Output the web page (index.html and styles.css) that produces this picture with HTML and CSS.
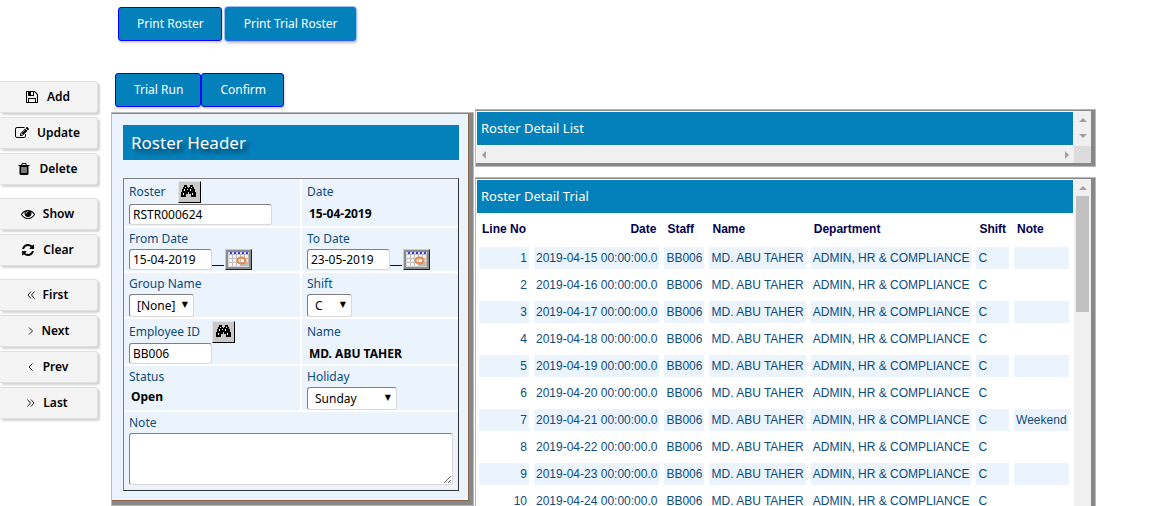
FILE: index.html
```html
<!DOCTYPE html>
<html lang="en">
<head>
<meta charset="utf-8">
<title>Roster</title>
<link rel="stylesheet" href="styles.css">
</head>
<body>
<svg class="defs" aria-hidden="true">
  <symbol id="binoculars" viewBox="0 0 16 14">
    <path d="M4 0h3v2h1v1h1V2h1V0h3v2h1v2h1v3h1v5h-5V9H9V7H8v2H6v3H1V7h1V4h1V2h1z" transform="translate(-1 0)"/>
    <path d="M4 2h1v1H4zM3 4h1v2H3zM2 8h1v2H2zM10 2h1v1h-1zM9 4h1v2H9zM11 8h1v2h-1zM6 4h1v1H6z" fill="#fff"/>
  </symbol>
  <symbol id="calendar" viewBox="0 0 20 14">
    <path d="M0 0h20v14H0z" fill="#bdbdbd"/>
    <path d="M0 3h3v3H0zM4 3h3v3H4zM8 3h3v3H8zM12 3h3v3h-3zM16 3h3v3h-3zM0 7h3v3H0zM4 7h3v3H4zM8 7h3v3H8zM12 7h3v3h-3zM16 7h3v3h-3zM0 11h3v3H0zM4 11h3v3H4zM8 11h3v3H8z" fill="#f2f2f2"/>
    <path d="M0 0h20v2H0z" fill="#d8d8f0"/>
    <path d="M1 1h19" stroke="#3a3af0" stroke-width="2" stroke-dasharray="2 2" fill="none"/>
    <ellipse cx="12.500" cy="8.500" rx="4" ry="3" fill="none" stroke="#ee8540" stroke-width="2"/>
    <path d="M17 6v5" stroke="#ee9d63" fill="none"/>
  </symbol>
</svg>
<div class="page">
  <nav class="side">
    <div class="group">
      <button class="nav-btn"><svg class="fa" viewBox="0 0 1792 1792"><path d="M512 1536h768v-384h-768v384zm896 0h128v-896q0-14-10-38.500t-20-34.500l-281-281q-10-10-34-20t-39-10v416q0 40-28 68t-68 28h-576q-40 0-68-28t-28-68v-416h-128v1280h128v-416q0-40 28-68t68-28h832q40 0 68 28t28 68v416zm-384-928v-320q0-13-9.500-22.500t-22.500-9.500h-192q-13 0-22.500 9.500t-9.500 22.500v320q0 13 9.500 22.500t22.500 9.500h192q13 0 22.500-9.500t9.500-22.500zm640 32v928q0 40-28 68t-68 28h-1344q-40 0-68-28t-28-68v-1344q0-40 28-68t68-28h928q40 0 88 20t76 48l280 280q28 28 48 76t20 88z"/></svg>Add</button>
      <button class="nav-btn"><svg class="fa" viewBox="0 0 1792 1792"><path d="M888 1184l116-116-152-152-116 116v56h96v96h56zm440-720q-16-16-33 1l-350 350q-17 17-1 33t33-1l350-350q17-17 1-33zm80 594v190q0 119-84.500 203.500t-203.500 84.500h-832q-119 0-203.500-84.500t-84.500-203.500v-832q0-119 84.500-203.500t203.500-84.500h832q63 0 117 25 15 7 18 23 3 17-9 29l-49 49q-14 14-32 8-23-6-45-6h-832q-66 0-113 47t-47 113v832q0 66 47 113t113 47h832q66 0 113-47t47-113v-126q0-13 9-22l64-64q15-15 35-7t20 29zm-96-738l288 288-672 672h-288v-288zm444 132l-92 92-288-288 92-92q28-28 68-28t68 28l152 152q28 28 28 68t-28 68z"/></svg>Update</button>
      <button class="nav-btn"><svg class="fa" viewBox="0 0 1792 1792"><path d="M704 1376v-704q0-14-9-23t-23-9h-64q-14 0-23 9t-9 23v704q0 14 9 23t23 9h64q14 0 23-9t9-23zm256 0v-704q0-14-9-23t-23-9h-64q-14 0-23 9t-9 23v704q0 14 9 23t23 9h64q14 0 23-9t9-23zm256 0v-704q0-14-9-23t-23-9h-64q-14 0-23 9t-9 23v704q0 14 9 23t23 9h64q14 0 23-9t9-23zm-544-992h448l-48-117q-7-9-17-11h-317q-10 2-17 11zm928 32v64q0 14-9 23t-23 9h-96v948q0 83-47 143.500t-113 60.500h-832q-66 0-113-58.500t-47-141.500v-952h-96q-14 0-23-9t-9-23v-64q0-14 9-23t23-9h309l70-167q15-37 54-63t79-26h320q40 0 79 26t54 63l70 167h309q14 0 23 9t9 23z"/></svg>Delete</button>
    </div>
    <div class="group">
      <button class="nav-btn"><svg class="fa" viewBox="0 0 1792 1792"><path d="M1664 960q-152-236-381-353 61 104 61 225 0 185-131.500 316.500t-316.500 131.500-316.500-131.500-131.500-316.500q0-121 61-225-229 117-381 353 133 205 333.500 326.500t434.500 121.500 434.500-121.500 333.500-326.500zm-720-384q0-20-14-34t-34-14q-125 0-214.500 89.500t-89.500 214.500q0 20 14 34t34 14 34-14 14-34q0-86 61-147t147-61q20 0 34-14t14-34zm848 384q0 34-20 69-140 230-376.500 368.500t-499.500 138.500-499.500-139-376.500-368q-20-35-20-69t20-69q140-229 376.500-368t499.500-139 499.500 139 376.500 368q20 35 20 69z"/></svg>Show</button>
      <button class="nav-btn"><svg class="fa" viewBox="0 0 1792 1792"><path d="M1639 1056q0 5-1 7-64 268-268 434.500t-478 166.500q-146 0-282.500-55t-243.500-157l-129 129q-19 19-45 19t-45-19-19-45v-448q0-26 19-45t45-19h448q26 0 45 19t19 45-19 45l-137 137q71 66 161 102t187 36q134 0 250-65t186-179q11-17 53-117 8-23 30-23h192q13 0 22.500 9.500t9.500 22.500zm25-800v448q0 26-19 45t-45 19h-448q-26 0-45-19t-19-45 19-45l138-138q-148-137-349-137-134 0-250 65t-186 179q-11 17-53 117-8 23-30 23h-199q-13 0-22.500-9.500t-9.500-22.500v-7q65-268 270-434.500t480-166.500q146 0 284 55.500t245 156.500l130-129q19-19 45-19t45 19 19 45z"/></svg>Clear</button>
    </div>
    <div class="group">
      <button class="nav-btn"><svg class="angle" viewBox="0 0 8 10"><path d="M4 1.500L1 5l3 3.500M7.500 1.500l-3 3.500 3 3.500"/></svg>First</button>
      <button class="nav-btn"><svg class="angle" viewBox="0 0 8 10"><path d="M3 1.500L6.500 5 3 8.500"/></svg>Next</button>
      <button class="nav-btn"><svg class="angle" viewBox="0 0 8 10"><path d="M5.500 1.500L2 5l3.500 3.500"/></svg>Prev</button>
      <button class="nav-btn"><svg class="angle" viewBox="0 0 8 10"><path d="M.5 1.500l3 3.500-3 3.500M4 1.500L7 5 4 8.500"/></svg>Last</button>
    </div>
  </nav>

  <main class="main">
    <div class="prints">
      <button class="btn">Print Roster</button>
      <button class="btn btn-active">Print Trial Roster</button>
    </div>
    <div class="columns">
      <section class="left">
        <div class="actions">
          <button class="btn">Trial Run</button><button class="btn">Confirm</button>
        </div>
        <div class="panel form-panel">
          <h1 class="title">Roster Header</h1>
          <form class="fields">
            <div class="cell">
              <div class="line tall"><label for="roster">Roster</label><button type="button" class="find" aria-label="Find roster"><svg><use href="#binoculars"/></svg></button></div>
              <input id="roster" class="text wide" value="RSTR000624">
            </div>
            <div class="cell">
              <div class="line tall">Date</div>
              <strong class="value">15-04-2019</strong>
            </div>
            <div class="cell">
              <label class="line" for="from">From Date</label>
              <div class="line"><input id="from" class="text" value="15-04-2019"><a class="blank" href="#" aria-label="Pick from date"></a><button type="button" class="cal" aria-label="Calendar"><svg><use href="#calendar"/></svg></button></div>
            </div>
            <div class="cell">
              <label class="line" for="to">To Date</label>
              <div class="line"><input id="to" class="text" value="23-05-2019"><a class="blank" href="#" aria-label="Pick to date"></a><button type="button" class="cal" aria-label="Calendar"><svg><use href="#calendar"/></svg></button></div>
            </div>
            <div class="cell">
              <label class="line" for="groupname">Group Name</label>
              <span class="select group-select"><select id="groupname"><option>[None]</option></select></span>
            </div>
            <div class="cell">
              <label class="line" for="shift">Shift</label>
              <span class="select shift-select"><select id="shift"><option>C</option></select></span>
            </div>
            <div class="cell">
              <div class="line tall"><label for="employee">Employee ID</label><button type="button" class="find" aria-label="Find employee"><svg><use href="#binoculars"/></svg></button></div>
              <input id="employee" class="text" value="BB006">
            </div>
            <div class="cell">
              <div class="line tall">Name</div>
              <strong class="value">MD. ABU TAHER</strong>
            </div>
            <div class="cell">
              <div class="line">Status</div>
              <strong class="value">Open</strong>
            </div>
            <div class="cell">
              <label class="line" for="holiday">Holiday</label>
              <span class="select holiday-select"><select id="holiday"><option>Sunday</option></select></span>
            </div>
            <div class="cell note">
              <label class="line" for="note">Note</label>
              <textarea id="note"></textarea>
            </div>
          </form>
        </div>
      </section>

      <section class="right">
        <div class="panel list-panel">
          <div class="view">
            <h2 class="bar">Roster Detail List</h2>
            <div class="hscroll"><i class="arrow left-arrow"></i><i class="arrow right-arrow"></i></div>
          </div>
          <div class="vscroll"><i class="arrow up-arrow"></i><i class="arrow down-arrow"></i><div class="corner"></div></div>
        </div>
        <div class="panel trial-panel">
          <div class="view">
            <h2 class="bar">Roster Detail Trial</h2>
            <table class="trial">
              <thead><tr><th class="num">Line No</th><th class="num">Date</th><th>Staff</th><th>Name</th><th>Department</th><th>Shift</th><th>Note</th></tr></thead>
              <tbody>
                <tr><td class="num">1</td><td class="num">2019-04-15 00:00:00.0</td><td>BB006</td><td>MD. ABU TAHER</td><td>ADMIN, HR &amp; COMPLIANCE</td><td>C</td><td></td></tr>
                <tr><td class="num">2</td><td class="num">2019-04-16 00:00:00.0</td><td>BB006</td><td>MD. ABU TAHER</td><td>ADMIN, HR &amp; COMPLIANCE</td><td>C</td><td></td></tr>
                <tr><td class="num">3</td><td class="num">2019-04-17 00:00:00.0</td><td>BB006</td><td>MD. ABU TAHER</td><td>ADMIN, HR &amp; COMPLIANCE</td><td>C</td><td></td></tr>
                <tr><td class="num">4</td><td class="num">2019-04-18 00:00:00.0</td><td>BB006</td><td>MD. ABU TAHER</td><td>ADMIN, HR &amp; COMPLIANCE</td><td>C</td><td></td></tr>
                <tr><td class="num">5</td><td class="num">2019-04-19 00:00:00.0</td><td>BB006</td><td>MD. ABU TAHER</td><td>ADMIN, HR &amp; COMPLIANCE</td><td>C</td><td></td></tr>
                <tr><td class="num">6</td><td class="num">2019-04-20 00:00:00.0</td><td>BB006</td><td>MD. ABU TAHER</td><td>ADMIN, HR &amp; COMPLIANCE</td><td>C</td><td></td></tr>
                <tr><td class="num">7</td><td class="num">2019-04-21 00:00:00.0</td><td>BB006</td><td>MD. ABU TAHER</td><td>ADMIN, HR &amp; COMPLIANCE</td><td>C</td><td>Weekend</td></tr>
                <tr><td class="num">8</td><td class="num">2019-04-22 00:00:00.0</td><td>BB006</td><td>MD. ABU TAHER</td><td>ADMIN, HR &amp; COMPLIANCE</td><td>C</td><td></td></tr>
                <tr><td class="num">9</td><td class="num">2019-04-23 00:00:00.0</td><td>BB006</td><td>MD. ABU TAHER</td><td>ADMIN, HR &amp; COMPLIANCE</td><td>C</td><td></td></tr>
                <tr><td class="num">10</td><td class="num">2019-04-24 00:00:00.0</td><td>BB006</td><td>MD. ABU TAHER</td><td>ADMIN, HR &amp; COMPLIANCE</td><td>C</td><td></td></tr>
              </tbody>
            </table>
          </div>
          <div class="vscroll"><i class="arrow up-arrow"></i><div class="thumb"></div></div>
        </div>
      </section>
    </div>
  </main>
</div>
</body>
</html>
```
FILE: styles.css
```css
* { box-sizing: border-box; }
body {
  margin: 0;
  height: 100vh;
  overflow: hidden;
  background: #fff;
  color: #0b4a7d;
  font: 12px/20px "Noto Sans", "Open Sans", sans-serif;
}
button, input, select, textarea { font: inherit; margin: 0; }
.defs { display: none; }
.page { display: flex; align-items: flex-start; gap: 13px; }

/* Side navigation */
.side { width: 98px; flex: none; padding-top: 81px; display: flex; flex-direction: column; gap: 13px; }
.group { display: flex; flex-direction: column; gap: 4px; }
.nav-btn {
  display: flex; align-items: center; justify-content: center; gap: 8px;
  height: 32px; padding: 0 2px 0 0;
  border: 1px solid #e0e0e0; border-left: 0; border-radius: 0 3px 3px 0;
  background: #f4f4f4; color: #000; font-weight: 600;
  box-shadow: 2px 2px 2px #d4d4d4;
}
.fa { width: 14px; height: 14px; }
.angle { width: 8px; height: 10px; fill: none; stroke: #222; stroke-width: 1; }

.main { flex: 1; min-width: 0; padding-right: 63px; }
.prints { display: flex; gap: 3px; padding: 7px 0 0 7px; height: 73px; align-items: flex-start; }
.actions { display: flex; padding-left: 4px; margin-bottom: 5px; }
.btn {
  height: 34px; padding: 0 17px 1px 18px;
  border: 1px solid #00f; border-radius: 3px;
  background: #0480bb; color: #fff;
  box-shadow: 1px 2px 2px #d4d4d4;
}
.btn-active { border-color: #2a5cff; box-shadow: 0 0 0 1px #9cc3f0, 1px 2px 3px #bbb; }

.columns { display: flex; align-items: flex-start; gap: 1px; }
.left { width: 363px; flex: none; }
.right { flex: 1; min-width: 0; padding-top: 36px; display: flex; flex-direction: column; gap: 10px; }

/* Panels */
.panel { border: 1px solid #b8b8b8; box-shadow: inset 0 1px #888, inset -4px -4px #888; }
.form-panel { background: #ebf4fc; padding: 12px 14px 14px 11px; box-shadow: inset 0 1px #888, inset -4px -4px #888, inset -5px -5px #8a6a4a; }
.title {
  margin: 0 0 18px; padding: 0 8px; height: 35px; line-height: 35px;
  background: #0480bb; color: #fff; font-size: 17px; font-weight: 400;
  text-shadow: 4px 4px 4px #023a55;
}
.fields {
  display: grid; grid-template-columns: 176px 1fr;
  grid-template-rows: 47px 43px 44px 45px 44px auto;
  gap: 2px; background: #fff;
  border: 1px solid #333; border-top-color: #808080; border-left-color: #808080;
}
.cell { background: #ebf4fc; padding: 1px 5px 0; display: flex; flex-direction: column; align-items: flex-start; }
.line { display: flex; align-items: center; height: 20px; }
.tall { height: 24px; }
.note { grid-column: 1 / -1; padding-bottom: 5px; }
.value { padding-left: 2px; color: #000; font-weight: 700; }
.text {
  width: 83px; height: 21px; padding: 0 3px; color: #000; background: #fff;
  border: 1px solid #808080; border-right-color: #d8d8d8; border-bottom-color: #d8d8d8; border-radius: 3px;
}
.wide { width: 143px; }
.find {
  width: 23px; height: 22px; margin-left: 12px; padding: 0; display: grid; place-items: center;
  background: #c8c8c8; border: 1px solid #e4e4e4; border-right-color: #000; border-bottom-color: #000;
}
.find svg { width: 16px; height: 14px; }
.blank { width: 12px; height: 14px; border-bottom: 1px solid #0000a0; }
.cal {
  width: 27px; height: 21px; margin-left: 1px; padding: 0; display: grid; place-items: center;
  background: #d6d6d6; border: 2px solid #777; border-color: #ccc #222 #222 #ccc;
  outline: 2px solid #8c8c8c; outline-offset: -3px;
}
.cal svg { width: 20px; height: 14px; }
.select { position: relative; }
.select::after {
  content: "▼"; position: absolute; right: 6px; top: 0; line-height: 22px;
  color: #000; font-family: "DejaVu Sans", sans-serif; font-size: 8px; pointer-events: none;
}
select {
  display: block; width: 100%; height: 23px; padding: 0 7px; appearance: none; color: #000; background: #fff;
  border: 1px solid #808080; border-right-color: #d8d8d8; border-bottom-color: #d8d8d8; border-radius: 3px;
}
.group-select { width: 65px; }
.shift-select { width: 45px; }
.holiday-select { width: 90px; }
textarea {
  display: block; width: 100%; height: 52px; background: #fff; resize: vertical;
  border: 1px solid #808080; border-right-color: #d8d8d8; border-bottom-color: #d8d8d8; border-radius: 3px;
}

/* Detail lists */
.list-panel, .trial-panel { display: flex; padding: 1px 4px 4px 0; }
.list-panel { padding-bottom: 3px; box-shadow: inset 0 1px #888, inset -4px -3px #888; }
.view { flex: 1; min-width: 0; padding: 1px 1px 0; }
.list-panel .view { padding-right: 0; }
.list-panel .bar { margin-right: 1px; }
.bar {
  margin: 0; padding: 0 4px; height: 33px; line-height: 33px;
  background: #0480bb; color: #fff; font-size: 13px; font-weight: 400;
}
.vscroll { position: relative; width: 17px; flex: none; background: #f0f0f0; display: flex; flex-direction: column; align-items: center; }
.hscroll { display: flex; justify-content: space-between; align-items: center; height: 17px; margin-top: 1px; padding: 0 5px; background: #f0f0f0; }
.arrow { width: 0; height: 0; border: 4px solid transparent; }
.up-arrow { margin: 3px 0 6px; border-bottom-color: #a0a0a0; }
.down-arrow { margin-top: 6px; border-top-color: #a0a0a0; }
.left-arrow { border-left-width: 0; border-right-color: #a0a0a0; }
.right-arrow { border-right-width: 0; border-left-color: #a0a0a0; }
.corner { width: 17px; height: 17px; margin-top: auto; background: #dcdcdc; }
.thumb { width: 13px; height: 116px; background: #c1c1c1; }
.trial { border-collapse: separate; border-spacing: 5px; margin: 0 -3px; font: 12px/22px "Liberation Sans", Arial, sans-serif; white-space: nowrap; }
th { padding: 0 3px 2px; color: #000050; text-align: left; }
td { padding: 0 2px; height: 22px; }
.num { text-align: right; }
tbody tr:nth-child(odd) td { background: #ebf4fc; }
```
